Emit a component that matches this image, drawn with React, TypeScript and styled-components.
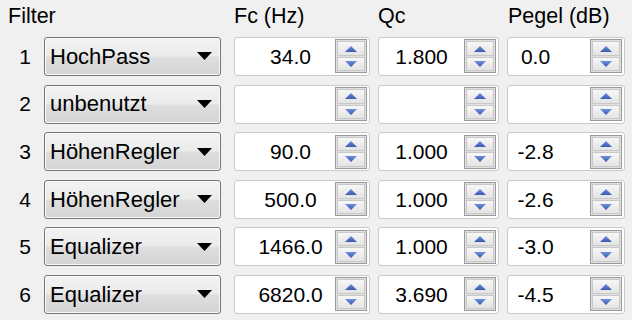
import React from "react";
import styled, { createGlobalStyle } from "styled-components";

const GlobalStyle = createGlobalStyle`
  html, body {
    margin: 0;
    padding: 0;
    background: #f0f0f0;
  }
  body {
    font-family: "Liberation Sans", Arial, sans-serif;
    color: #000;
    width: 632px;
    height: 320px;
    overflow: hidden;
  }
`;

const Panel = styled.div`
  display: grid;
  grid-template-columns: 36px 182px 136px 121px 118px;
  grid-template-rows: 23.4px;
  grid-auto-rows: 39px;
  column-gap: 8px;
  row-gap: 8.6px;
  padding-top: 5px;
  font-size: 21px;
  line-height: 23.4px;
`;

const HeaderLabel = styled.div<{ $span?: number; $pad?: number }>`
  grid-column: span ${(p) => p.$span ?? 1};
  padding-left: ${(p) => p.$pad ?? 0}px;
  font-size: 21.5px;
  white-space: nowrap;
  align-self: center;
`;

const RowNumber = styled.div`
  text-align: right;
  padding-right: 5px;
  align-self: center;
`;

const Combo = styled.div`
  width: 177px;
  box-sizing: border-box;
  display: flex;
  align-items: center;
  justify-content: space-between;
  border: 1px solid #777;
  border-radius: 3px;
  box-shadow: inset 0 0 0 1px #f8f8f8;
  background: linear-gradient(#f3f3f3 0%, #ebebeb 48%, #dedede 52%, #d4d4d4 100%);
  padding: 0 8px 0 5px;
`;

const ComboText = styled.span`
  font-size: 22px;
  white-space: nowrap;
`;

const Field = styled.div`
  box-sizing: border-box;
  display: flex;
  align-items: center;
  background: #fff;
  border: 1px solid #cacaca;
  border-radius: 3px;
  padding-right: 2px;
`;

const ValueText = styled.div<{ $padLeft?: number; $padRight?: number }>`
  flex: 1;
  text-align: center;
  padding-left: ${(p) => p.$padLeft ?? 0}px;
  padding-right: ${(p) => p.$padRight ?? 0}px;
  white-space: nowrap;
`;

const SpinBox = styled.div`
  box-sizing: border-box;
  width: 32px;
  height: 34px;
  display: flex;
  flex-direction: column;
  gap: 1px;
  padding: 1px;
  border: 1px solid #9a9a9a;
  background: #e0e0e0;
`;

const SpinButton = styled.div`
  flex: 1;
  display: flex;
  align-items: center;
  justify-content: center;
  border: 1px solid #c8c8c8;
  background: linear-gradient(#f7f7f7, #e4e4e4);
`;

const Arrow = ({ up }: { up?: boolean }) => (
  <svg width="12" height="6" viewBox="0 0 12 6">
    <defs>
      <linearGradient id={up ? "gu" : "gd"} x1="0" y1="0" x2="0" y2="1">
        <stop offset="0" stopColor="#6f8fe0" />
        <stop offset="1" stopColor="#3a58ad" />
      </linearGradient>
    </defs>
    <polygon
      points={up ? "6,0 12,6 0,6" : "0,0 12,0 6,6"}
      fill={`url(#${up ? "gu" : "gd"})`}
    />
  </svg>
);

const DropArrow = () => (
  <svg width="15" height="8" viewBox="0 0 15 8">
    <polygon points="0,0 15,0 7.5,8" fill="#000" />
  </svg>
);

const Spinner = () => (
  <SpinBox>
    <SpinButton>
      <Arrow up />
    </SpinButton>
    <SpinButton>
      <Arrow />
    </SpinButton>
  </SpinBox>
);

type Row = { type: string; fc: string; qc: string; pegel: string };

const rows: Row[] = [
  { type: "HochPass", fc: "34.0", qc: "1.800", pegel: "0.0" },
  { type: "unbenutzt", fc: "", qc: "", pegel: "" },
  { type: "HöhenRegler", fc: "90.0", qc: "1.000", pegel: "-2.8" },
  { type: "HöhenRegler", fc: "500.0", qc: "1.000", pegel: "-2.6" },
  { type: "Equalizer", fc: "1466.0", qc: "1.000", pegel: "-3.0" },
  { type: "Equalizer", fc: "6820.0", qc: "3.690", pegel: "-4.5" },
];

export default function App() {
  return (
    <>
      <GlobalStyle />
      <Panel>
        <HeaderLabel $span={2} $pad={8}>Filter</HeaderLabel>
        <HeaderLabel>Fc (Hz)</HeaderLabel>
        <HeaderLabel>Qc</HeaderLabel>
        <HeaderLabel $pad={1}>Pegel (dB)</HeaderLabel>
        {rows.map((r, i) => (
          <React.Fragment key={i}>
            <RowNumber>{i + 1}</RowNumber>
            <Combo>
              <ComboText>{r.type}</ComboText>
              <DropArrow />
            </Combo>
            <Field>
              <ValueText $padLeft={11}>{r.fc}</ValueText>
              <Spinner />
            </Field>
            <Field>
              <ValueText>{r.qc}</ValueText>
              <Spinner />
            </Field>
            <Field>
              <ValueText $padRight={27}>{r.pegel}</ValueText>
              <Spinner />
            </Field>
          </React.Fragment>
        ))}
      </Panel>
    </>
  );
}
